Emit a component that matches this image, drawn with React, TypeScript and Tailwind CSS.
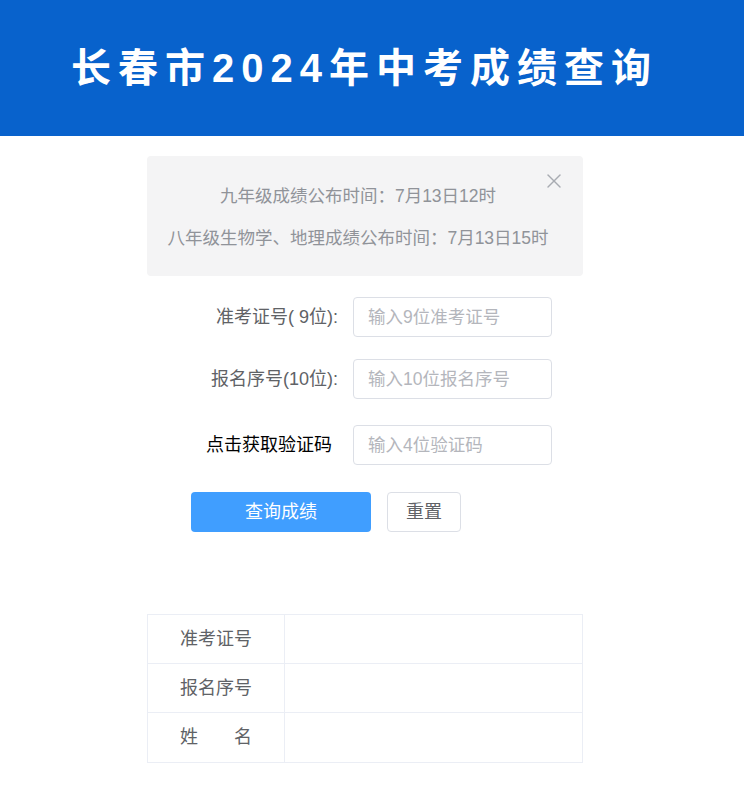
import { X } from "lucide-react";

const font = "font-['Liberation_Sans','Noto_Sans_CJK_SC',sans-serif]";

function Field({ label, placeholder, dark }: { label: string; placeholder: string; dark?: boolean }) {
  return (
    <div className="flex items-center">
      <div
        className={
          dark
            ? "w-[206px] pr-[21px] text-right text-[18px] leading-[40px] text-black"
            : "w-[206px] pr-[15px] text-right text-[18px] leading-[40px] text-[#606266]"
        }
      >
        {label}
      </div>
      <input
        placeholder={placeholder}
        className="h-[40px] w-[199px] rounded-[4px] border border-[#dcdfe6] bg-white px-[14px] text-[17.5px] text-[#606266] outline-none placeholder:text-[#b4b6bc]"
      />
    </div>
  );
}

function Row({ label, last }: { label: string; last?: boolean }) {
  return (
    <div className={last ? "flex h-[49px]" : "flex h-[49px] border-b border-[#ebeef5]"}>
      <div className="flex w-[137px] items-center justify-center border-r border-[#ebeef5] text-[18px] text-[#606266]">
        {label}
      </div>
      <div className="flex-1" />
    </div>
  );
}

export default function App() {
  return (
    <div className={`min-h-[798px] bg-white ${font}`}>
      <header className="flex h-[136px] items-center bg-[#0862cc] pl-[71px]">
        <h1 className="text-[40px] font-bold leading-none tracking-[7px] text-white">
          长春市2024年中考成绩查询
        </h1>
      </header>

      <div className="relative ml-[147px] mt-[20px] h-[120px] w-[436px] rounded-[4px] bg-[#f4f4f5] pl-[16px] pr-[30px] pt-[19px] text-center text-[17.5px] text-[#909399]">
        <div className="leading-[42px]">九年级成绩公布时间：7月13日12时</div>
        <div className="leading-[42px]">八年级生物学、地理成绩公布时间：7月13日15时</div>
        <X className="absolute right-[17px] top-[13px] h-[24px] w-[24px] text-[#a8abb2]" strokeWidth={1.4} />
      </div>

      <div className="ml-[147px] mt-[21px] w-[436px]">
        <Field label="准考证号( 9位):" placeholder="输入9位准考证号" />
        <div className="mt-[22px]">
          <Field label="报名序号(10位):" placeholder="输入10位报名序号" />
        </div>
        <div className="mt-[26px]">
          <Field label="点击获取验证码" placeholder="输入4位验证码" dark />
        </div>
        <div className="ml-[44px] mt-[27px] flex gap-[16px]">
          <button className="h-[40px] w-[180px] rounded-[4px] bg-[#409eff] text-[18px] text-white">查询成绩</button>
          <button className="h-[40px] w-[74px] rounded-[4px] border border-[#dcdfe6] bg-white text-[18px] text-[#606266]">
            重置
          </button>
        </div>
      </div>

      <div className="ml-[147px] mt-[82px] w-[436px] border border-[#ebeef5]">
        <Row label="准考证号" />
        <Row label="报名序号" />
        <Row label="姓　　名" last />
      </div>
    </div>
  );
}
